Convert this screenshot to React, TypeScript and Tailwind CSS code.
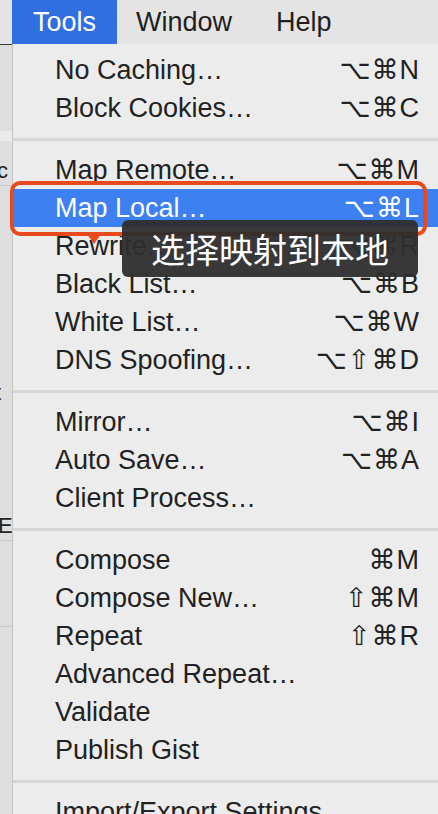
import React from 'react';

type Item = { label: string; keys?: string } | 'sep';

const items: Item[] = [
  { label: 'No Caching…', keys: '⌥⌘N' },
  { label: 'Block Cookies…', keys: '⌥⌘C' },
  'sep',
  { label: 'Map Remote…', keys: '⌥⌘M' },
  { label: 'Map Local…', keys: '⌥⌘L' },
  { label: 'Rewrite…', keys: '⌥⌘R' },
  { label: 'Black List…', keys: '⌥⌘B' },
  { label: 'White List…', keys: '⌥⌘W' },
  { label: 'DNS Spoofing…', keys: '⌥⇧⌘D' },
  'sep',
  { label: 'Mirror…', keys: '⌥⌘I' },
  { label: 'Auto Save…', keys: '⌥⌘A' },
  { label: 'Client Process…' },
  'sep',
  { label: 'Compose', keys: '⌘M' },
  { label: 'Compose New…', keys: '⇧⌘M' },
  { label: 'Repeat', keys: '⇧⌘R' },
  { label: 'Advanced Repeat…' },
  { label: 'Validate' },
  { label: 'Publish Gist' },
  'sep',
  { label: 'Import/Export Settings…' },
];

const font = { fontFamily: '"Liberation Sans", "DejaVu Sans", Arial, sans-serif' };

export default function App() {
  return (
    <div className="w-[438px] h-[814px] overflow-hidden bg-[#e9e9e9] relative" style={font}>
      {/* menu bar */}
      <div className="h-[44px] bg-[#e4e4e4] flex items-stretch text-[27px] text-[#1f1f1f]">
        <div className="w-[12px]" />
        <div className="bg-[#2f6fe0] text-white px-[21px] flex items-center">Tools</div>
        <div className="ml-[19px] flex items-center">Window</div>
        <div className="ml-[44px] flex items-center">Help</div>
      </div>

      <div className="flex h-[770px]">
        {/* window behind */}
        <div className="w-[12px] bg-[#dedede] border-t border-[#3a3a3a] flex flex-col text-[22px] text-[#222] overflow-hidden">
          <div className="h-[86px]" />
          <div className="h-[10px] bg-[#ebebeb]" />
          <div className="h-[16px]" />
          <div className="h-[28px] leading-[28px] -ml-[3px]">c</div>
          <div className="h-px bg-[#c9c9c9]" />
          <div className="h-[193px]" />
          <div className="h-[28px] leading-[28px] -ml-[5px]">t</div>
          <div className="h-[105px]" />
          <div className="h-[28px] leading-[28px] -ml-[2px]">Eu</div>
          <div className="h-px bg-[#c9c9c9]" />
          <div className="h-[85px]" />
          <div className="h-px bg-[#c9c9c9]" />
        </div>

        {/* menu */}
        <div className="flex-1 bg-[#ececec] border-l border-[#c6c6c6] pt-[7px] text-[27px] text-[#222]">
          {items.map((it, i) =>
            it === 'sep' ? (
              <div key={i} className="h-[24px] flex items-center">
                <div className="h-[3px] w-full bg-[#d6d6d6]" />
              </div>
            ) : (
              <div
                key={i}
                className={
                  'h-[38px] flex items-center justify-between pl-[42px] pr-[18px] ' +
                  (it.label === 'Map Local…' ? 'bg-[#3d80f2] text-white' : '')
                }
              >
                <span>{it.label}</span>
                {it.keys && <span className="tracking-[1px]">{it.keys}</span>}
              </div>
            )
          )}
        </div>
      </div>

      {/* annotation */}
      <div className="absolute left-[10px] top-[181px] w-[417px] h-[55px] border-[4px] border-[#e8491d] rounded-[10px]" />
      <div className="absolute left-[87px] top-[234px] w-0 h-0 border-l-[7px] border-r-[7px] border-t-[10px] border-l-transparent border-r-transparent border-t-[#e8491d]" />
      <div className="absolute left-[122px] top-[220px] w-[296px] h-[57px] rounded-[6px] bg-[#2e2e2e]/95 flex items-center justify-center">
        <span
          className="text-white text-[34px] leading-none"
          style={{ fontFamily: '"Noto Sans CJK SC", sans-serif' }}
        >
          选择映射到本地
        </span>
      </div>
    </div>
  );
}
